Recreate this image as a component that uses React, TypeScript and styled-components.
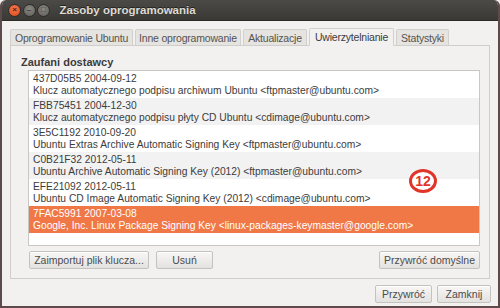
import React from "react";
import styled, { createGlobalStyle } from "styled-components";

const GlobalStyle = createGlobalStyle`
  html, body { margin: 0; padding: 0; background: #f4eeee; }
  body { font-family: "Liberation Sans", "DejaVu Sans", sans-serif; font-size: 11px; color: #3c3c3c; }
`;

const keys = [
  { id: "437D05B5 2004-09-12", name: "Klucz automatycznego podpisu archiwum Ubuntu <ftpmaster@ubuntu.com>" },
  { id: "FBB75451 2004-12-30", name: "Klucz automatycznego podpisu płyty CD Ubuntu <cdimage@ubuntu.com>" },
  { id: "3E5C1192 2010-09-20", name: "Ubuntu Extras Archive Automatic Signing Key <ftpmaster@ubuntu.com>" },
  { id: "C0B21F32 2012-05-11", name: "Ubuntu Archive Automatic Signing Key (2012) <ftpmaster@ubuntu.com>" },
  { id: "EFE21092 2012-05-11", name: "Ubuntu CD Image Automatic Signing Key (2012) <cdimage@ubuntu.com>" },
  { id: "7FAC5991 2007-03-08", name: "Google, Inc. Linux Package Signing Key <linux-packages-keymaster@google.com>" },
];

const tabs = [
  { label: "Oprogramowanie Ubuntu", w: 123 },
  { label: "Inne oprogramowanie", w: 106 },
  { label: "Aktualizacje", w: 64 },
  { label: "Uwierzytelnianie", w: 85, active: true },
  { label: "Statystyki", w: 53 },
];

const Window = styled.div`
  width: 500px;
  height: 308px;
  box-sizing: border-box;
  display: flex;
  flex-direction: column;
  border: 2px solid #5e4a4a;
  border-top: none;
  border-radius: 6px 6px 0 0;
  background: #f2f1f0;
  overflow: hidden;
`;

const TitleBar = styled.div`
  height: 20px;
  flex: none;
  display: flex;
  align-items: center;
  padding-left: 6px;
  background: linear-gradient(#4b4a46, #3a3935);
  border-bottom: 1px solid #2c2b28;
`;

const WinButton = styled.span<{ $close?: boolean }>`
  width: 11px;
  height: 11px;
  border-radius: 50%;
  margin-right: 1.5px;
  display: flex;
  align-items: center;
  justify-content: center;
  background: ${(p) => (p.$close ? "radial-gradient(circle at 50% 35%, #f47a50, #d9481c)" : "radial-gradient(circle at 50% 35%, #8a8883, #5d5c58)")};
  border: 0.5px solid #2e2d2a;
  color: ${(p) => (p.$close ? "#5a1a08" : "#3a3935")};
  font-size: 8px;
  font-weight: bold;
  line-height: 1;
`;

const Title = styled.span`
  margin-left: 8px;
  color: #dfdbd2;
  font-weight: bold;
  font-size: 11.5px;
  text-shadow: 0 -1px 0 #222;
`;

const Body = styled.div`
  flex: 1;
  display: flex;
  flex-direction: column;
  padding: 7px 0 0 8px;
`;

const TabRow = styled.div`
  display: flex;
  align-items: flex-end;
  height: 17px;
  gap: 2px;
  position: relative;
  z-index: 1;
`;

const Tab = styled.div<{ $active?: boolean; $w: number }>`
  width: ${(p) => p.$w}px;
  height: ${(p) => (p.$active ? "18px" : "16px")};
  box-sizing: border-box;
  display: flex;
  align-items: center;
  justify-content: center;
  font-size: 10.5px;
  letter-spacing: -0.2px;
  border: 1px solid #d2d0cc;
  border-bottom: ${(p) => (p.$active ? "1px solid #f2f1f0" : "none")};
  border-radius: 2px 2px 0 0;
  background: ${(p) => (p.$active ? "#f2f1f0" : "#e6e4e1")};
  color: ${(p) => (p.$active ? "#3c3c3c" : "#55534f")};
  margin-bottom: ${(p) => (p.$active ? "-1px" : "0")};
  white-space: nowrap;
`;

const Panel = styled.div`
  width: 480px;
  height: 234px;
  box-sizing: border-box;
  border: 1px solid #d0cecb;
  padding: 8px 9px 9px 10px;
  display: flex;
  flex-direction: column;
`;

const Heading = styled.div`
  font-weight: bold;
  color: #3c3c3c;
  height: 16px;
  line-height: 16px;
`;

const ListBox = styled.div`
  margin: 0 0 5px 7px;
  height: 176px;
  flex: none;
  box-sizing: border-box;
  border: 1px solid #c9c7c3;
  background: #ffffff;
  position: relative;
`;

const Row = styled.div<{ $alt?: boolean; $selected?: boolean }>`
  height: 27px;
  box-sizing: border-box;
  padding: 2px 4px 0;
  line-height: 11.5px;
  font-size: 10.25px;
  white-space: nowrap;
  background: ${(p) => (p.$selected ? "#f07746" : p.$alt ? "#f2f2f2" : "#ffffff")};
  color: ${(p) => (p.$selected ? "#ffffff" : "#3c3c3c")};
`;

const Badge = styled.div`
  position: absolute;
  left: 380px;
  top: 98px;
  width: 28px;
  height: 24px;
  box-sizing: border-box;
  border-radius: 50%;
  border: 3px solid #e2352a;
  background: #ffffff;
  color: #e2352a;
  font-weight: bold;
  font-size: 14px;
  line-height: 1;
  display: flex;
  align-items: center;
  justify-content: center;
  font-family: "Liberation Sans", sans-serif;
`;

const ButtonRow = styled.div`
  display: flex;
  margin-left: 8px;
  gap: 7px;
`;

const Spacer = styled.div`
  flex: 1;
`;

const Button = styled.button<{ $w?: number }>`
  height: 18px;
  width: ${(p) => (p.$w ? `${p.$w}px` : "auto")};
  padding: 0;
  box-sizing: border-box;
  font-family: inherit;
  font-size: 10.5px;
  color: #4c4c4c;
  border: 1px solid #c4c2be;
  border-radius: 2px;
  background: linear-gradient(#f8f7f6, #e4e2df);
  box-shadow: inset 0 1px 0 #ffffff;
  white-space: nowrap;
`;

const DialogButtons = styled.div`
  display: flex;
  justify-content: flex-end;
  gap: 5px;
  padding: 6px 7px 0 0;
`;

export default function App() {
  return (
    <>
      <GlobalStyle />
      <Window>
        <TitleBar>
          <WinButton $close>×</WinButton>
          <WinButton>–</WinButton>
          <WinButton>□</WinButton>
          <Title>Zasoby oprogramowania</Title>
        </TitleBar>
        <Body>
          <TabRow>
            {tabs.map((t) => (
              <Tab key={t.label} $w={t.w} $active={t.active}>
                {t.label}
              </Tab>
            ))}
          </TabRow>
          <Panel>
            <Heading>Zaufani dostawcy</Heading>
            <ListBox>
              {keys.map((k, i) => (
                <Row key={k.id} $alt={i % 2 === 1} $selected={i === 5}>
                  <div>{k.id}</div>
                  <div>{k.name}</div>
                </Row>
              ))}
              <Badge>12</Badge>
            </ListBox>
            <ButtonRow>
              <Button $w={120}>Zaimportuj plik klucza...</Button>
              <Button $w={57}>Usuń</Button>
              <Spacer />
              <Button $w={101}>Przywróć domyślne</Button>
            </ButtonRow>
          </Panel>
          <DialogButtons>
            <Button $w={57}>Przywróć</Button>
            <Button $w={54}>Zamknij</Button>
          </DialogButtons>
        </Body>
      </Window>
    </>
  );
}
